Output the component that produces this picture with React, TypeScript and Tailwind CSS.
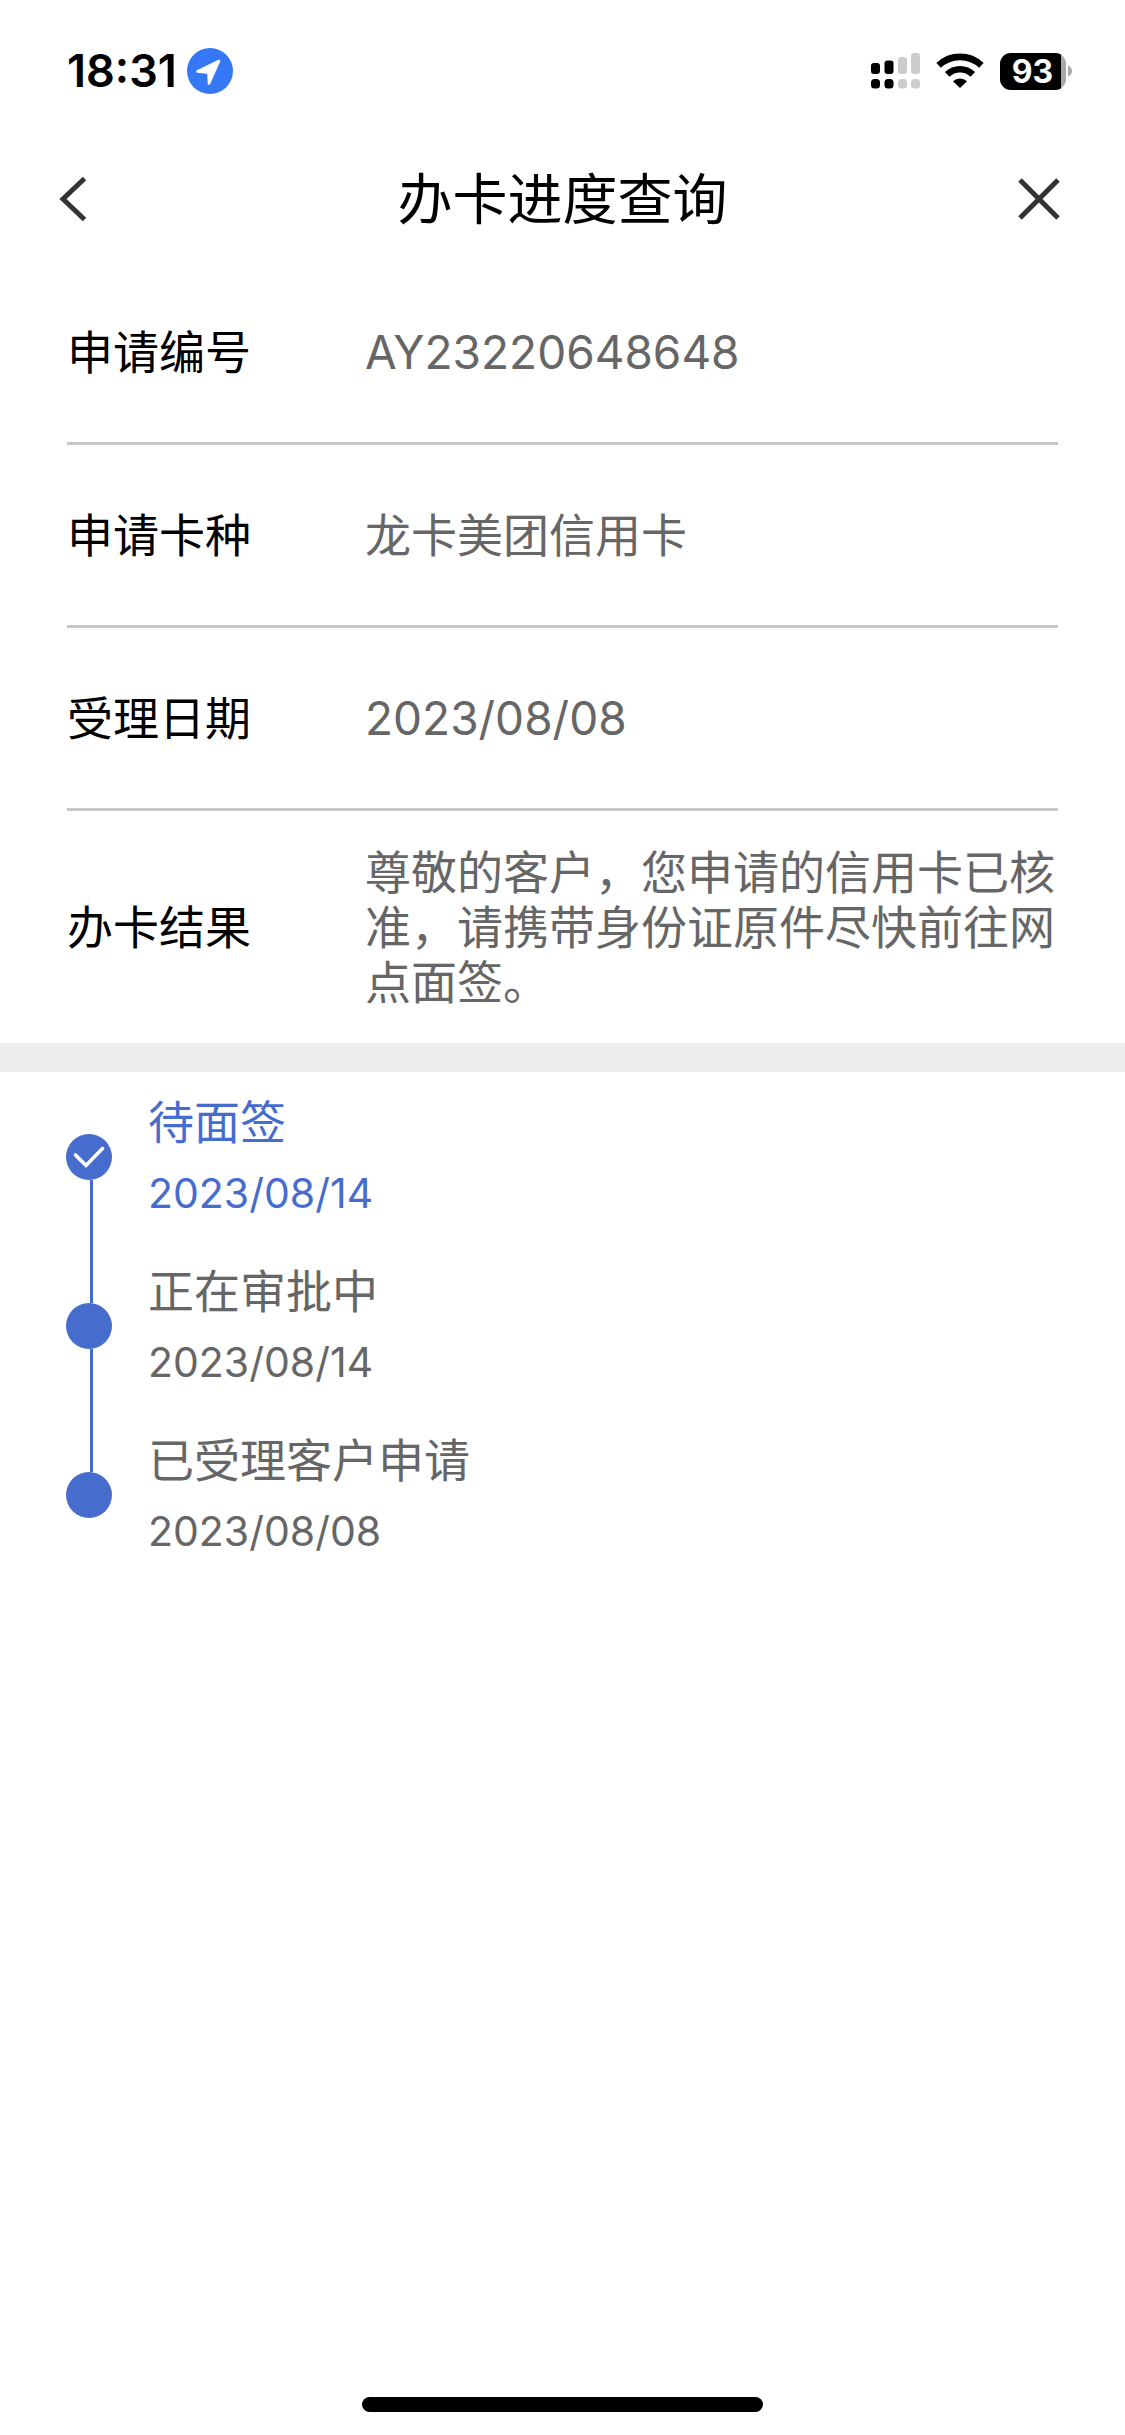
import React from 'react';

interface DetailItem {
  label: string;
  value: string;
}

interface ProgressStep {
  title: string;
  date: string;
  active?: boolean;
}

const details: DetailItem[] = [
  { label: '申请编号', value: 'AY23220648648' },
  { label: '申请卡种', value: '龙卡美团信用卡' },
  { label: '受理日期', value: '2023/08/08' },
  {
    label: '办卡结果',
    value: '尊敬的客户，您申请的信用卡已核准，请携带身份证原件尽快前往网点面签。',
  },
];

const steps: ProgressStep[] = [
  { title: '待面签', date: '2023/08/14', active: true },
  { title: '正在审批中', date: '2023/08/14' },
  { title: '已受理客户申请', date: '2023/08/08' },
];

function LocationIcon() {
  return (
    <svg width="46" height="46" viewBox="0 0 46 46" aria-hidden="true">
      <circle cx="23" cy="23" r="23" fill="#3478f6" />
      <path
        d="M32 13 L10.5 23.5 L21.5 24.8 L22 35.5 Z"
        fill="#fff"
        stroke="#fff"
        strokeWidth="2.6"
        strokeLinejoin="round"
      />
    </svg>
  );
}

function SignalIcon() {
  return (
    <svg width="49" height="36" viewBox="0 0 49 36" aria-hidden="true">
      <g fill="#000">
        <rect x="0" y="10" width="9" height="11" rx="3" />
        <rect x="13.5" y="7.5" width="9" height="13.5" rx="3" />
        <rect x="0" y="26" width="9" height="9.5" rx="3.5" />
        <rect x="13.5" y="26" width="9" height="9.5" rx="3.5" />
      </g>
      <g fill="#ccc">
        <rect x="27" y="4" width="9" height="17" rx="3" />
        <rect x="40" y="0" width="9" height="21" rx="3" />
        <rect x="27" y="26" width="9" height="9.5" rx="3.5" />
        <rect x="40" y="26" width="9" height="9.5" rx="3.5" />
      </g>
    </svg>
  );
}

function WifiIcon() {
  return (
    <svg width="48" height="36" viewBox="0 0 48 36" aria-hidden="true">
      <g fill="none" stroke="#000" strokeWidth="6.6">
        <path d="M2.6 12.4 A31 31 0 0 1 45.4 12.4" />
        <path d="M11.2 21.4 A18.5 18.5 0 0 1 36.8 21.4" />
      </g>
      <path d="M17 28.2 A10.5 10.5 0 0 1 31 28.2 L24 35 Z" fill="#000" />
    </svg>
  );
}

function Battery() {
  return (
    <div className="flex items-center">
      <div className="flex h-[37px] w-[66px] justify-start overflow-hidden rounded-[11px] bg-[#a9a9a9]">
        <span className="flex w-[61px] items-center justify-center bg-black pl-1 text-[32px] leading-[37px] font-bold text-white">
          93
        </span>
      </div>
      <svg width="7" height="12" viewBox="0 0 7 12" aria-hidden="true">
        <path d="M2 0.5 Q6 2 6 6 Q6 10 2 11.5 Z" fill="#a9a9a9" />
      </svg>
    </div>
  );
}

function StatusBar() {
  return (
    <div className="flex h-[134px] items-center justify-between pt-2 pr-[52px] pl-[67px]">
      <div className="flex items-center gap-2.5">
        <span className="text-[45px] leading-[48px] font-semibold">18:31</span>
        <LocationIcon />
      </div>
      <div className="flex items-center gap-4">
        <SignalIcon />
        <WifiIcon />
        <Battery />
      </div>
    </div>
  );
}

function Header() {
  return (
    <header className="flex h-32 items-center justify-between px-[58px] pt-0.5">
      <button type="button" aria-label="返回">
        <svg width="50" height="46" viewBox="0 0 50 46" fill="none">
          <path d="M26.5 2.5 L5 23 L26.5 43.5" stroke="#333" strokeWidth="5" />
        </svg>
      </button>
      <h1 className="text-[55px] leading-[64px]">办卡进度查询</h1>
      <button type="button" aria-label="关闭">
        <svg width="50" height="46" viewBox="0 0 50 46" fill="none">
          <path d="M3 4 L41 42 M41 4 L3 42" stroke="#333" strokeWidth="5" />
        </svg>
      </button>
    </header>
  );
}

function DetailRow({ label, value }: DetailItem) {
  return (
    <div className="flex min-h-[183px] items-center border-b-3 border-[#c8c8c8] text-[46px] leading-[55px] last:min-h-[232px] last:border-b-0">
      <dt className="w-[298px] shrink-0">{label}</dt>
      <dd className="min-w-0 flex-1 text-[#666]">{value}</dd>
    </div>
  );
}

function StepItem({ title, date, active }: ProgressStep) {
  return (
    <li className="group flex h-[169px]">
      <div className="flex w-[46px] shrink-0 flex-col items-center">
        <span className="ml-1 w-[3px] flex-1 bg-[#4169d6] group-first:invisible" />
        <svg width="46" height="46" viewBox="0 0 46 46" aria-hidden="true">
          <circle cx="23" cy="23" r="23" fill="#466ccd" />
          {active && (
            <path
              d="M9.5 21 L20 31.5 L36.5 14.5"
              fill="none"
              stroke="#fff"
              strokeWidth="3.6"
              strokeLinecap="round"
            />
          )}
        </svg>
        <span className="ml-1 w-[3px] flex-1 bg-[#4169d6] group-last:invisible" />
      </div>
      <div
        className={`flex flex-col justify-center pl-9 ${active ? 'text-[#466ccd]' : 'text-[#666]'}`}
      >
        <p className="text-[46px] leading-[72px]">{title}</p>
        <p className="text-[41px] leading-[70px]">{date}</p>
      </div>
    </li>
  );
}

export default function App() {
  return (
    <div className="flex min-h-screen w-full flex-col bg-white font-['Inter','Noto_Sans_CJK_SC',sans-serif] text-black">
      <StatusBar />
      <Header />
      <main className="flex-1">
        <dl className="px-[67px]">
          {details.map((item) => (
            <DetailRow key={item.label} {...item} />
          ))}
        </dl>
        <div className="h-[29px] bg-[#ededed]" />
        <ol className="px-[66px]">
          {steps.map((step) => (
            <StepItem key={step.title} {...step} />
          ))}
        </ol>
      </main>
      <div className="mx-auto mb-[23px] h-[15px] w-[401px] rounded-full bg-black" />
    </div>
  );
}
